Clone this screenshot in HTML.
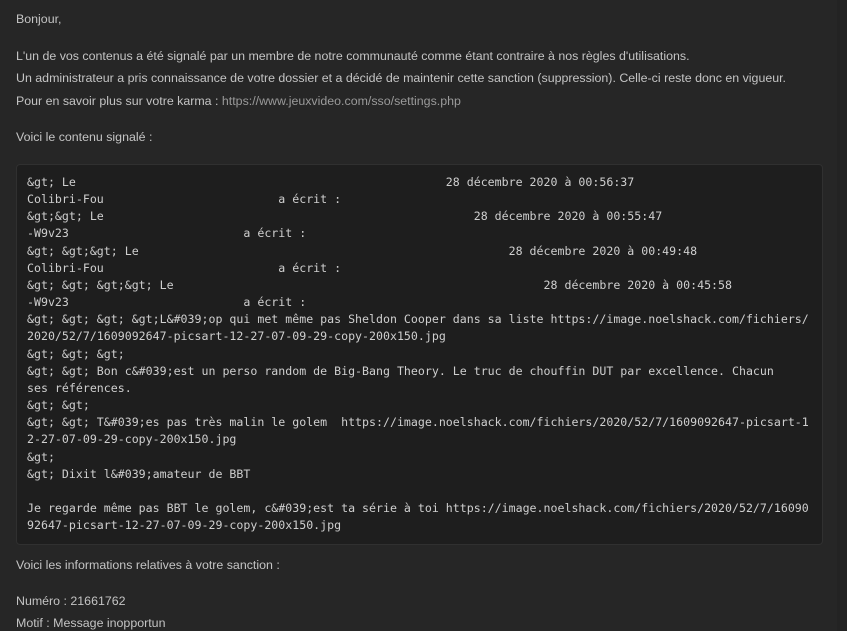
<!DOCTYPE html>
<html><head><meta charset="utf-8"><style>
html,body{margin:0;padding:0;}
body{width:847px;height:631px;overflow:hidden;background:#262626;position:relative;font-family:"Liberation Sans",Arial,sans-serif;font-size:12.4px;color:#c4c4c4;}
.strip{position:absolute;left:837px;top:0;width:10px;height:631px;background:#232323;}
.t{position:absolute;left:16px;white-space:nowrap;line-height:14px;}
.t a{color:#9a9a9a;text-decoration:none;}
pre{position:absolute;left:16px;top:164px;width:795px;height:361px;margin:0;padding:9px 0 9px 10px;background:#1e1e1e;border:1px solid #303030;border-radius:4px;font-family:"DejaVu Sans Mono","Liberation Mono",monospace;font-size:11.6px;line-height:17.15px;color:#cfcfcf;box-sizing:content-box;overflow:hidden;}
</style></head><body>
<div class="strip"></div>
<div class="t" style="top:12px">Bonjour,</div>
<div class="t" style="top:49px">L'un de vos contenus a été signalé par un membre de notre communauté comme étant contraire à nos règles d'utilisations.</div>
<div class="t" style="top:71px">Un administrateur a pris connaissance de votre dossier et a décidé de maintenir cette sanction (suppression). Celle-ci reste donc en vigueur.</div>
<div class="t" style="top:94px">Pour en savoir plus sur votre karma : <a>https://www.jeuxvideo.com/sso/settings.php</a></div>
<div class="t" style="top:130px">Voici le contenu signalé :</div>
<pre>&amp;gt; Le                                                     28 décembre 2020 à 00:56:37
Colibri-Fou                         a écrit :
&amp;gt;&amp;gt; Le                                                     28 décembre 2020 à 00:55:47
-W9v23                         a écrit :
&amp;gt; &amp;gt;&amp;gt; Le                                                     28 décembre 2020 à 00:49:48
Colibri-Fou                         a écrit :
&amp;gt; &amp;gt; &amp;gt;&amp;gt; Le                                                     28 décembre 2020 à 00:45:58
-W9v23                         a écrit :
&amp;gt; &amp;gt; &amp;gt; &amp;gt;L&amp;#039;op qui met même pas Sheldon Cooper dans sa liste https://image.noelshack.com/fichiers/
2020/52/7/1609092647-picsart-12-27-07-09-29-copy-200x150.jpg
&amp;gt; &amp;gt; &amp;gt;
&amp;gt; &amp;gt; Bon c&amp;#039;est un perso random de Big-Bang Theory. Le truc de chouffin DUT par excellence. Chacun
ses références.
&amp;gt; &amp;gt;
&amp;gt; &amp;gt; T&amp;#039;es pas très malin le golem  https://image.noelshack.com/fichiers/2020/52/7/1609092647-picsart-1
2-27-07-09-29-copy-200x150.jpg
&amp;gt;
&amp;gt; Dixit l&amp;#039;amateur de BBT

Je regarde même pas BBT le golem, c&amp;#039;est ta série à toi https://image.noelshack.com/fichiers/2020/52/7/16090
92647-picsart-12-27-07-09-29-copy-200x150.jpg</pre>
<div class="t" style="top:558px">Voici les informations relatives à votre sanction :</div>
<div class="t" style="top:594px">Numéro : 21661762</div>
<div class="t" style="top:616px">Motif : Message inopportun</div>
</body></html>
